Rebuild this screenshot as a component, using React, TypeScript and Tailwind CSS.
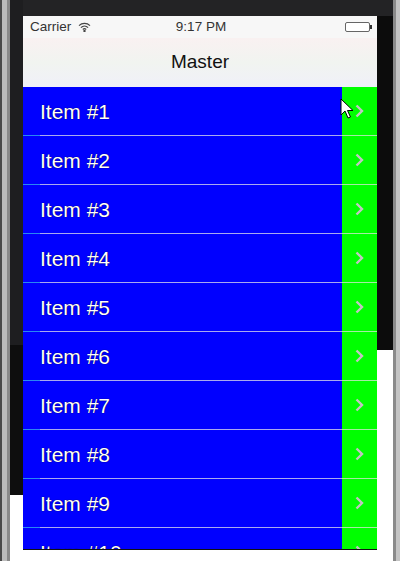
import React from 'react';

const items = Array.from({ length: 10 }, (_, i) => `Item #${i + 1}`);

const Chevron: React.FC = () => (
  <svg width="9" height="14" viewBox="0 0 9 14" fill="none">
    <path d="M1.5 1.5L7 7l-5.5 5.5" stroke="#c4c4c4" strokeWidth="2.4" />
  </svg>
);

const Wifi: React.FC = () => (
  <svg width="13" height="10" viewBox="0 0 13 10" fill="none" stroke="#444" strokeWidth="1.2">
    <path d="M1 3.6a8 8 0 0 1 11 0" />
    <path d="M2.9 5.6a5.2 5.2 0 0 1 7.2 0" />
    <path d="M4.8 7.5a2.5 2.5 0 0 1 3.4 0" />
    <circle cx="6.5" cy="9" r="0.6" fill="#444" />
  </svg>
);

const Cursor: React.FC = () => (
  <svg width="13" height="22" viewBox="0 0 13 22" className="absolute left-[317px] top-[11px]">
    <path
      d="M1 1v16l4-4 3 7 2.5-1-3-6.5h5.5z"
      fill="#fff"
      stroke="#000"
      strokeWidth="1"
      strokeLinejoin="round"
    />
  </svg>
);

const Row: React.FC<{ label: string; first?: boolean }> = ({ label, first }) => (
  <div className="relative flex h-[49px] shrink-0 flex-col">
    <div className="flex flex-1">
      <div className="flex flex-1 items-center bg-[#0000ff] pl-[17px]">
        <span className="text-[21px] leading-none text-white [text-shadow:0_0_1px_#000]">{label}</span>
      </div>
      <div className="flex w-[35px] items-center justify-center bg-[#00ff00]">
        <Chevron />
      </div>
    </div>
    <div className="flex h-px">
      <div className="w-[17px] bg-[#2a86f2]" />
      <div className="flex-1 bg-[#a9a9ef]" />
      <div className="w-[35px] bg-[#a6eaa6]" />
    </div>
    {first && <Cursor />}
  </div>
);

export default function App() {
  return (
    <div
      className="flex h-[561px] w-[400px] overflow-hidden bg-white"
      style={{ fontFamily: '"Liberation Sans", Arial, sans-serif' }}
    >
      {/* left frame */}
      <div className="flex w-[23px] shrink-0">
        <div className="w-[2px] bg-[#4a4a4a]" />
        <div className="w-[5px] bg-[#bcbcbc]" />
        <div className="w-[3px] bg-[#8a8a8a]" />
        <div className="flex w-[13px] flex-col">
          <div className="h-[345px] bg-[#1e1e20]" />
          <div className="h-[150px] bg-[#0e0e0e]" />
          <div className="flex-1 bg-white" />
        </div>
      </div>

      {/* screen */}
      <div className="flex w-[354px] shrink-0 flex-col">
        <div className="h-[16px] shrink-0 bg-[#232325]" />
        <div className="flex h-[22px] shrink-0 items-center bg-[#f7f7f7] pl-[7px] pr-[5px] text-[13.5px] text-[#333]">
          <div className="flex flex-1 items-center gap-[7px]">
            <span>Carrier</span>
            <Wifi />
          </div>
          <span>9:17 PM</span>
          <div className="flex flex-1 items-center justify-end">
            <div className="h-[10px] w-[25px] rounded-[2px] border border-[#666] bg-white" />
            <div className="h-[4px] w-[2px] bg-[#333]" />
          </div>
        </div>
        <div className="flex h-[49px] shrink-0 items-center justify-center bg-gradient-to-b from-[#f9f1f1] via-[#f1f4f0] to-[#f0f0f8] text-[19px] text-[#111]">
          Master
        </div>
        <div className="flex h-[463px] shrink-0 flex-col overflow-hidden border-b border-[#111]">
          {items.map((label, i) => (
            <Row key={label} label={label} first={i === 0} />
          ))}
        </div>
        <div className="flex-1 bg-white" />
      </div>

      {/* right frame */}
      <div className="flex w-[23px] shrink-0">
        <div className="flex w-[16px] flex-col">
          <div className="h-[16px] bg-[#232325]" />
          <div className="h-[334px] bg-[#0c0c0c]" />
          <div className="flex-1 bg-white" />
        </div>
        <div className="w-[3px] bg-[#8a8a8a]" />
        <div className="w-[4px] bg-[#c4c4c4]" />
      </div>
    </div>
  );
}
